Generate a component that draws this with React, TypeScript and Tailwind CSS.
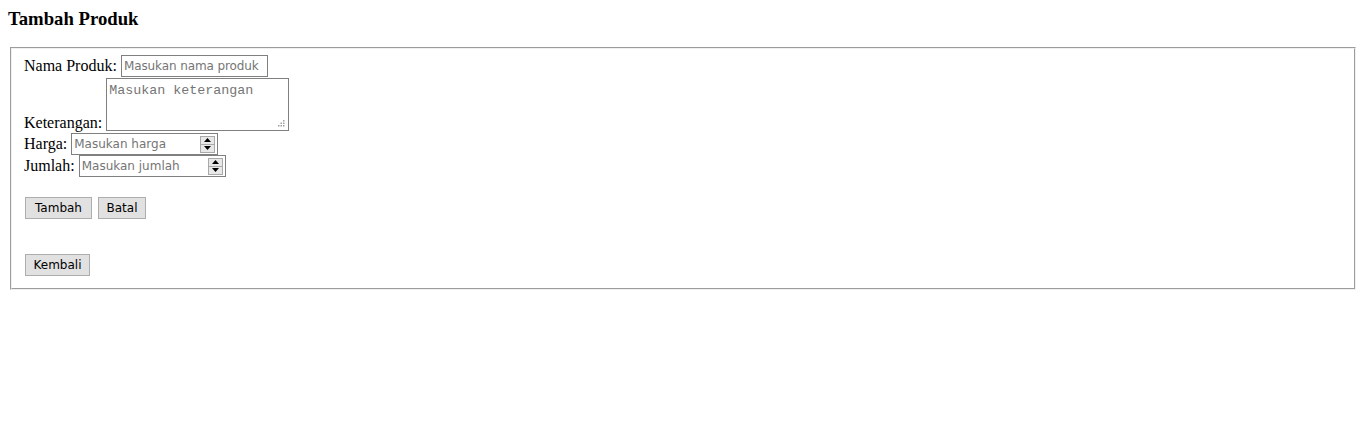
import React from 'react';

const ui = "font-['DejaVu_Sans',sans-serif] text-[12px]";

function Spinner() {
  return (
    <div className="flex flex-col w-[15px] h-[17px] mr-[2px] border border-[#a9a9a9] bg-[#e8e8e8]">
      <div className="flex-1 flex items-center justify-center border-b border-[#a9a9a9]">
        <svg width="7" height="4" viewBox="0 0 7 4">
          <path d="M0 4 L3.5 0 L7 4 Z" fill="#000" />
        </svg>
      </div>
      <div className="flex-1 flex items-center justify-center">
        <svg width="7" height="4" viewBox="0 0 7 4">
          <path d="M0 0 L3.5 4 L7 0 Z" fill="#000" />
        </svg>
      </div>
    </div>
  );
}

function NumberField({ placeholder }: { placeholder: string }) {
  return (
    <div className="flex items-center w-[147px] h-[22px] border border-[#808080] bg-white">
      <input
        type="text"
        placeholder={placeholder}
        className={`${ui} flex-1 min-w-0 h-full px-[2px] outline-none placeholder:text-[#757575]`}
      />
      <Spinner />
    </div>
  );
}

function Btn({ label, w }: { label: string; w: string }) {
  return (
    <button
      className={`${ui} ${w} h-[22px] bg-[#e1e1e1] border border-[#adadad] text-black flex items-center justify-center`}
    >
      {label}
    </button>
  );
}

function Grip() {
  return (
    <svg className="absolute right-[4px] bottom-[4px]" width="7" height="7" viewBox="0 0 7 7">
      <rect x="5" y="0" width="1.5" height="1.5" fill="#a0a0a0" />
      <rect x="2.5" y="2.5" width="1.5" height="1.5" fill="#a0a0a0" />
      <rect x="5" y="2.5" width="1.5" height="1.5" fill="#a0a0a0" />
      <rect x="0" y="5" width="1.5" height="1.5" fill="#a0a0a0" />
      <rect x="2.5" y="5" width="1.5" height="1.5" fill="#a0a0a0" />
      <rect x="5" y="5" width="1.5" height="1.5" fill="#a0a0a0" />
    </svg>
  );
}

export default function App() {
  return (
    <div className="p-2 bg-white min-h-[443px] font-['Liberation_Serif',serif] text-[16px] text-black">
      <h3 className="text-[18.72px] font-bold leading-[21px] mb-[18px]">Tambah Produk</h3>
      <fieldset className="mx-[2px] border-2 [border-style:groove] border-[#f0f0f0] pt-[6px] pb-[12px] px-[12px]">
        <div className="flex items-center gap-1 h-[22px]">
          <span className="leading-[18px]">Nama Produk:</span>
          <input
            type="text"
            placeholder="Masukan nama produk"
            className={`${ui} tracking-[-0.1px] w-[147px] h-[22px] border border-[#808080] px-[2px] outline-none placeholder:text-[#757575]`}
          />
        </div>
        <div className="flex items-start gap-1 mt-px h-[55px]">
          <span className="leading-[18px] self-end mb-[1px]">Keterangan:</span>
          <div className="relative flex h-[53px]">
            <textarea
              placeholder="Masukan keterangan"
              className="font-['Liberation_Mono',monospace] text-[13.33px] w-[183px] h-[53px] border border-[#808080] p-[2px] outline-none resize-none placeholder:text-[#757575]"
            />
            <Grip />
          </div>
        </div>
        <div className="flex items-center gap-1 h-[22px]">
          <span className="leading-[18px]">Harga:</span>
          <NumberField placeholder="Masukan harga" />
        </div>
        <div className="flex items-center gap-1 h-[22px]">
          <span className="leading-[18px]">Jumlah:</span>
          <NumberField placeholder="Masukan jumlah" />
        </div>
        <div className="flex gap-[6px] mt-[20px] ml-px h-[22px]">
          <Btn label="Tambah" w="w-[67px]" />
          <Btn label="Batal" w="w-[48px]" />
        </div>
        <div className="flex mt-[35px] ml-px h-[22px]">
          <Btn label="Kembali" w="w-[65px]" />
        </div>
      </fieldset>
    </div>
  );
}
